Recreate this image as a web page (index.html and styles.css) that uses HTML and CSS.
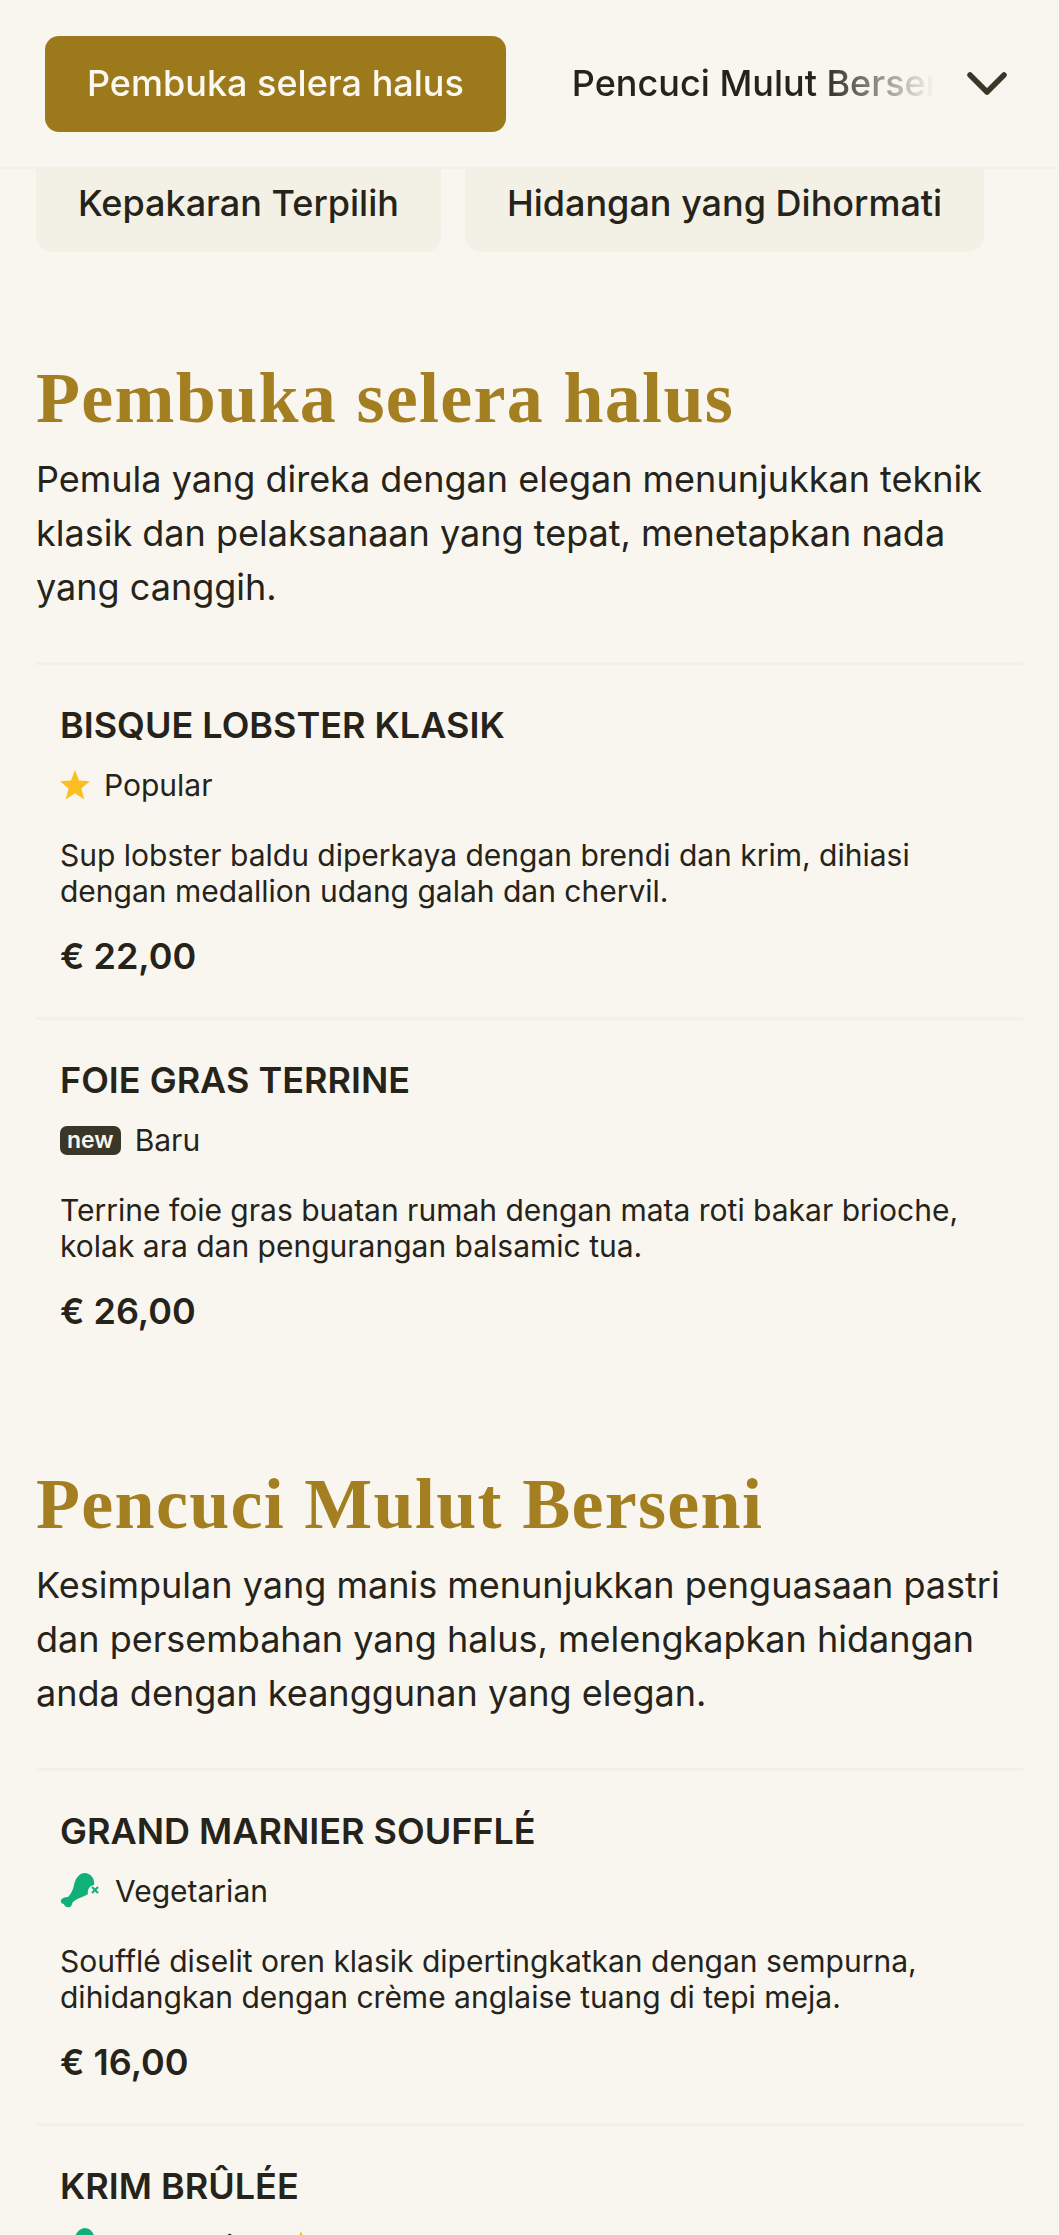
FILE: index.html
```html
<!DOCTYPE html>
<html lang="ms">
<head>
    <meta charset="UTF-8">
    <meta name="viewport" content="width=device-width, initial-scale=1.0">
    <title>Menu</title>
    <link rel="stylesheet" href="styles.css">
</head>
<body>
    <nav class="stickyNav">
        <div class="navTabs">
            <a class="navTab navTabActive">Pembuka selera halus</a>
            <a class="navTab">Pencuci Mulut Berseni</a>
        </div>
        <svg class="navChevron" viewBox="0 0 40 24" width="40" height="24" aria-hidden="true">
            <path d="M3 3 L20 20 L37 3" fill="none" stroke="#3a3628" stroke-width="5.5" stroke-linecap="round" stroke-linejoin="round"/>
        </svg>
    </nav>

    <div class="hiddenTabs">
        <a class="hiddenTab">Kepakaran Terpilih</a>
        <a class="hiddenTab">Hidangan yang Dihormati</a>
    </div>

    <section class="menuSection">
        <h2 class="sectionTitle">Pembuka selera halus</h2>
        <p class="sectionText">Pemula yang direka dengan elegan menunjukkan teknik klasik dan pelaksanaan yang tepat, menetapkan nada yang canggih.</p>

        <article class="dish">
            <h3 class="dishName">BISQUE LOBSTER KLASIK</h3>
            <div class="dishTags">
                <span class="dishTag">
                    <svg class="tagStar" viewBox="0 0 30 30" width="30" height="30" aria-hidden="true"><path d="M15 0 L19 10.6 L30 11.3 L21.4 18.4 L24.3 29.5 L15 23.3 L5.7 29.5 L8.6 18.4 L0 11.3 L11 10.6 Z" fill="#fbbf24"/></svg>
                    Popular
                </span>
            </div>
            <p class="dishText">Sup lobster baldu diperkaya dengan brendi dan krim, dihiasi dengan medallion udang galah dan chervil.</p>
            <div class="dishPrice">€ 22,00</div>
        </article>

        <article class="dish">
            <h3 class="dishName">FOIE GRAS TERRINE</h3>
            <div class="dishTags">
                <span class="dishTag"><span class="newBadge">new</span> Baru</span>
            </div>
            <p class="dishText">Terrine foie gras buatan rumah dengan mata roti bakar brioche, kolak ara dan pengurangan balsamic tua.</p>
            <div class="dishPrice">€ 26,00</div>
        </article>
    </section>

    <section class="menuSection">
        <h2 class="sectionTitle">Pencuci Mulut Berseni</h2>
        <p class="sectionText">Kesimpulan yang manis menunjukkan penguasaan pastri dan persembahan yang halus, melengkapkan hidangan anda dengan keanggunan yang elegan.</p>

        <article class="dish">
            <h3 class="dishName">GRAND MARNIER SOUFFLÉ</h3>
            <div class="dishTags">
                <span class="dishTag">
                    <svg class="tagMeat" viewBox="0 0 42 36" width="42" height="36" aria-hidden="true">
                        <path d="M24 1 C18 2 15 8 14 13 C13 18 11 22 8 25 C5 25 2 26 1 28 C0 31 3 32 4 32 C4 34 7 36 10 35 C12 34 12 31 13 30 C17 26 24 25 28 22 C27 18 29 14 34 13 C35 8 32 1 24 1 Z" fill="#10b078"/>
                        <path d="M32 15 L38 21 M38 15 L32 21" stroke="#10b078" stroke-width="2" fill="none"/>
                    </svg>
                    Vegetarian
                </span>
            </div>
            <p class="dishText">Soufflé diselit oren klasik dipertingkatkan dengan sempurna, dihidangkan dengan crème anglaise tuang di tepi meja.</p>
            <div class="dishPrice">€ 16,00</div>
        </article>

        <article class="dish">
            <h3 class="dishName">KRIM BRÛLÉE</h3>
            <div class="dishTags">
                <span class="dishTag">
                    <svg class="tagMeat" viewBox="0 0 42 36" width="42" height="36" aria-hidden="true">
                        <path d="M24 1 C18 2 15 8 14 13 C13 18 11 22 8 25 C5 25 2 26 1 28 C0 31 3 32 4 32 C4 34 7 36 10 35 C12 34 12 31 13 30 C17 26 24 25 28 22 C27 18 29 14 34 13 C35 8 32 1 24 1 Z" fill="#10b078"/>
                        <path d="M32 15 L38 21 M38 15 L32 21" stroke="#10b078" stroke-width="2" fill="none"/>
                    </svg>
                    Vegetarian
                </span>
                <span class="dishTag">
                    <svg class="tagStar" viewBox="0 0 30 30" width="30" height="30" aria-hidden="true"><path d="M15 0 L19 10.6 L30 11.3 L21.4 18.4 L24.3 29.5 L15 23.3 L5.7 29.5 L8.6 18.4 L0 11.3 L11 10.6 Z" fill="#fbbf24"/></svg>
                    Popular
                </span>
            </div>
        </article>
    </section>
</body>
</html>
```

FILE: styles.css
```css
*{
    margin: 0;
    padding: 0;
    box-sizing: border-box;
}
html, body{
    height: 2235px;
    overflow: hidden;
}
body{
    background-color: #f9f6ef;
    color: #25231a;
    font-family: "Inter", "Liberation Sans", sans-serif;
}
.stickyNav{
    position: relative;
    z-index: 2;
    display: flex;
    align-items: center;
    height: 169px;
    padding: 0 52px 0 45px;
    background-color: #f9f6ef;
    border-bottom: 2px solid #f3f0e8;
}
.navTabs{
    display: flex;
    flex: 1;
    align-items: center;
    gap: 24px;
    overflow: hidden;
    white-space: nowrap;
    -webkit-mask-image: linear-gradient(to right, #000 calc(100% - 115px), transparent 100%);
    mask-image: linear-gradient(to right, #000 calc(100% - 115px), transparent 100%);
}
.navTab{
    flex: none;
    padding: 0 42px 2px;
    font-size: 36px;
    font-weight: 500;
    line-height: 94px;
}
.navTabActive{
    background-color: #9c7a1c;
    border-radius: 14px;
    color: #fbf8f0;
}
.navChevron{
    flex: none;
    margin-left: 32px;
}
.hiddenTabs{
    display: flex;
    gap: 24px;
    padding: 0 36px;
    margin-top: -20px;
    margin-bottom: 104px;
}
.hiddenTab{
    padding: 6px 42px 1px;
    background-color: #f3f1e6;
    border-radius: 16px;
    font-size: 36px;
    font-weight: 500;
    line-height: 96px;
}
.menuSection{
    padding: 0 36px;
    margin-top: 90px;
}
.sectionTitle{
    color: #a47f22;
    font-family: "Liberation Serif", serif;
    font-size: 72px;
    font-weight: 700;
    letter-spacing: 1.3px;
    line-height: 84px;
}
.sectionText{
    margin-top: 12px;
    font-size: 36px;
    line-height: 54px;
}
.dish{
    padding: 38px 24px 39px;
    border-top: 3px solid #f3f0e8;
}
.sectionText + .dish{
    margin-top: 48px;
}
.dishName{
    font-size: 36px;
    font-weight: 600;
    line-height: 44px;
}
.dishTags{
    display: flex;
    gap: 18px;
    margin-top: 16px;
}
.dishTag{
    display: inline-flex;
    align-items: center;
    gap: 14px;
    font-size: 30px;
    line-height: 44px;
}
.tagMeat{
    margin-right: -1px;
    margin-top: -2px;
}
.newBadge{
    padding: 0 7px;
    background-color: #3a3628;
    border-radius: 7px;
    color: #f9f6ef;
    font-size: 23px;
    font-weight: 600;
    line-height: 29px;
}
.dishText{
    margin-top: 30px;
    font-size: 30px;
    line-height: 36px;
}
.dishPrice{
    margin-top: 25px;
    font-size: 36px;
    font-weight: 600;
    line-height: 44px;
}
```
